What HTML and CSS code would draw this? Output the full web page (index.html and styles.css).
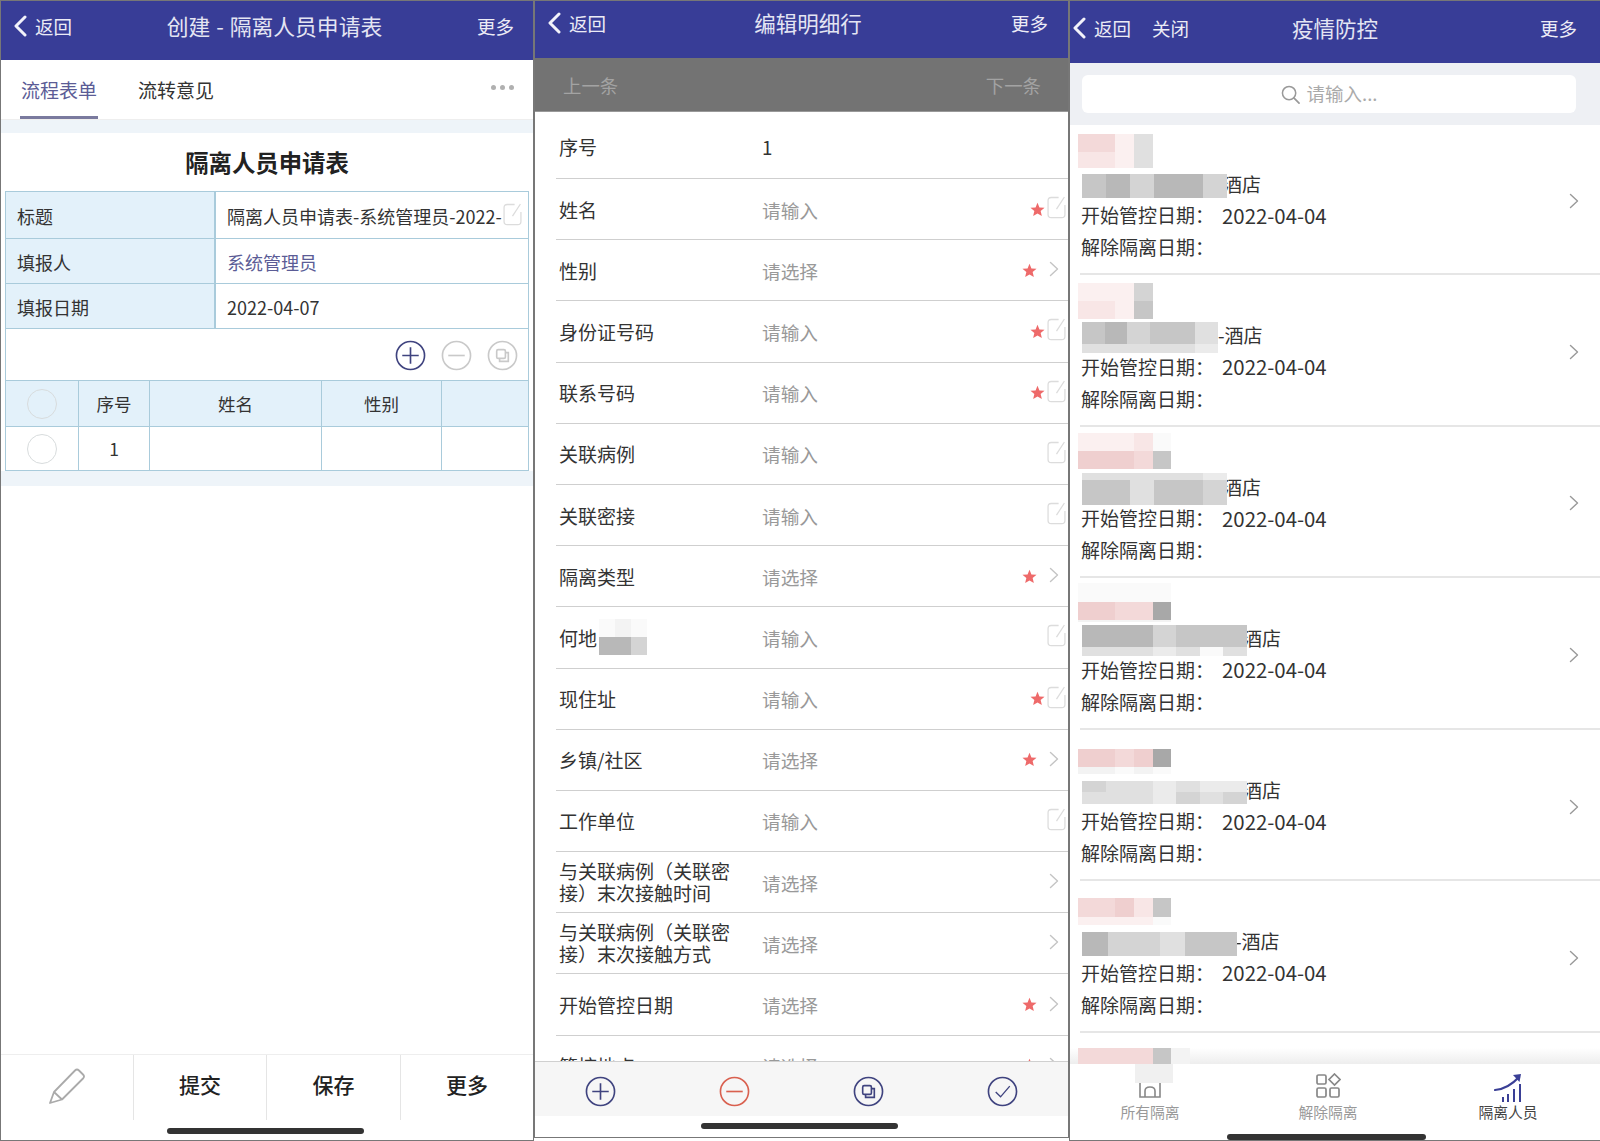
FILE: index.html
```html
<!DOCTYPE html>
<html lang="zh-CN">
<head>
<meta charset="utf-8">
<title>疫情防控</title>
<link rel="stylesheet" href="styles.css">
</head>
<body>
<svg class="defs" xmlns="http://www.w3.org/2000/svg">
  <symbol id="back" viewBox="0 0 14 22"><path d="M12 2 L3 11 L12 20" fill="none" stroke="currentColor" stroke-width="3" stroke-linecap="round" stroke-linejoin="round"/></symbol>
  <symbol id="chev" viewBox="0 0 10 16"><path d="M1.5 1.5 L8.5 8 L1.5 14.5" fill="none" stroke="currentColor" stroke-width="1.4" stroke-linecap="round" stroke-linejoin="round"/></symbol>
  <symbol id="edit" viewBox="0 0 18 22"><path d="M11 2 H4 Q1 2 1 5 V18 Q1 21 4 21 H14 Q17 21 17 18 V9" fill="none" stroke="currentColor" stroke-width="1.2"/><path d="M16.5 1.5 L9 13" fill="none" stroke="currentColor" stroke-width="1.2"/></symbol>
  <symbol id="star" viewBox="0 0 20 20"><polygon points="10,1 12.6,7.2 19.4,7.7 14.2,12.1 15.8,18.8 10,15.2 4.2,18.8 5.8,12.1 0.6,7.7 7.4,7.2" fill="currentColor"/></symbol>
  <symbol id="plus" viewBox="0 0 32 32"><circle cx="16" cy="16" r="14.5" fill="none" stroke="currentColor" stroke-width="1.7"/><path d="M7.5 16 H24.5 M16 7.5 V24.5" fill="none" stroke="currentColor" stroke-width="1.7"/></symbol>
  <symbol id="minus" viewBox="0 0 32 32"><circle cx="16" cy="16" r="14.5" fill="none" stroke="currentColor" stroke-width="1.7"/><path d="M7.5 16 H24.5" fill="none" stroke="currentColor" stroke-width="1.7"/></symbol>
  <symbol id="copy" viewBox="0 0 32 32"><circle cx="16" cy="16" r="14.5" fill="none" stroke="currentColor" stroke-width="1.7"/><rect x="10" y="10" width="9" height="9" rx="1.5" fill="none" stroke="currentColor" stroke-width="1.7"/><path d="M19 13 H22 V22 H13 V19" fill="none" stroke="currentColor" stroke-width="1.7"/></symbol>
  <symbol id="check" viewBox="0 0 32 32"><circle cx="16" cy="16" r="14.5" fill="none" stroke="currentColor" stroke-width="1.7"/><path d="M9 16.5 L14 21.5 L23.5 10.5" fill="none" stroke="currentColor" stroke-width="1.4"/></symbol>
</svg>

<main class="screens">
  <section class="phone p1">
    <header class="hdr">
      <div class="hdr-left"><svg class="back"><use href="#back"/></svg><span>返回</span></div>
      <div class="hdr-title">创建 - 隔离人员申请表</div>
      <div class="hdr-more">更多</div>
    </header>
    <nav class="tabs">
      <span class="tab active">流程表单</span>
      <span class="tab">流转意见</span>
      <span class="dots"><i></i><i></i><i></i></span>
    </nav>
    <div class="band"></div>
    <h1 class="form-title">隔离人员申请表</h1>
    <div class="sheet">
      <div class="frow r-first"><div class="flabel">标题</div><div class="fval"><span class="clip">隔离人员申请表-系统管理员-2022-</span><svg class="ic-edit edit-t"><use href="#edit"/></svg></div></div>
      <div class="frow"><div class="flabel">填报人</div><div class="fval link">系统管理员</div></div>
      <div class="frow"><div class="flabel">填报日期</div><div class="fval">2022-04-07</div></div>
      <div class="sub-tools">
        <svg class="cbtn navy"><use href="#plus"/></svg>
        <svg class="cbtn pale"><use href="#minus"/></svg>
        <svg class="cbtn pale"><use href="#copy"/></svg>
      </div>
      <div class="srow shead"><div class="scell"><span class="radio"></span></div><div class="scell">序号</div><div class="scell">姓名</div><div class="scell">性别</div><div class="scell"></div></div>
      <div class="srow sbody"><div class="scell"><span class="radio"></span></div><div class="scell">1</div><div class="scell"></div><div class="scell"></div><div class="scell"></div></div>
    </div>
    <div class="band band-b"></div>
    <div class="grow"></div>
    <div class="actions">
      <div class="act"><svg class="pencil" viewBox="0 0 36 36"><path d="M1 35 L5 24 L26 2.5 Q28 0.5 30 2.5 L34 6.5 Q36 8.5 34 10.5 L13 31.5 Z M5 24 L13 31.5" fill="none" stroke="#aaa" stroke-width="1.8" stroke-linejoin="round"/></svg></div>
      <div class="act">提交</div>
      <div class="act">保存</div>
      <div class="act">更多</div>
    </div>
    <div class="home home-1"></div>
  </section>

  <section class="phone p2">
    <header class="hdr">
      <div class="hdr-left"><svg class="back"><use href="#back"/></svg><span>返回</span></div>
      <div class="hdr-title">编辑明细行</div>
      <div class="hdr-more">更多</div>
    </header>
    <div class="pager"><span>上一条</span><span>下一条</span></div>
    <div class="rows">
      <div class="row row-first"><div class="rlabel">序号</div><div class="rval filled">1</div></div>
      <div class="row"><div class="rlabel">姓名</div><div class="rval">请输入</div><div class="rend"><svg class="star"><use href="#star"/></svg><svg class="ic-edit"><use href="#edit"/></svg></div></div>
      <div class="row"><div class="rlabel">性别</div><div class="rval">请选择</div><div class="rend sel"><svg class="star"><use href="#star"/></svg><svg class="ic-chev"><use href="#chev"/></svg></div></div>
      <div class="row"><div class="rlabel">身份证号码</div><div class="rval">请输入</div><div class="rend"><svg class="star"><use href="#star"/></svg><svg class="ic-edit"><use href="#edit"/></svg></div></div>
      <div class="row"><div class="rlabel">联系号码</div><div class="rval">请输入</div><div class="rend"><svg class="star"><use href="#star"/></svg><svg class="ic-edit"><use href="#edit"/></svg></div></div>
      <div class="row"><div class="rlabel">关联病例</div><div class="rval">请输入</div><div class="rend"><svg class="ic-edit"><use href="#edit"/></svg></div></div>
      <div class="row"><div class="rlabel">关联密接</div><div class="rval">请输入</div><div class="rend"><svg class="ic-edit"><use href="#edit"/></svg></div></div>
      <div class="row"><div class="rlabel">隔离类型</div><div class="rval">请选择</div><div class="rend sel"><svg class="star"><use href="#star"/></svg><svg class="ic-chev"><use href="#chev"/></svg></div></div>
      <div class="row"><div class="rlabel rlabel-m">何地<span class="tiles m-where"><i class="f2"></i><i class="f"></i><i class="f2"></i><i class="g2"></i><i class="g2"></i><i class="g4"></i></span></div><div class="rval">请输入</div><div class="rend"><svg class="ic-edit"><use href="#edit"/></svg></div></div>
      <div class="row"><div class="rlabel">现住址</div><div class="rval">请输入</div><div class="rend"><svg class="star"><use href="#star"/></svg><svg class="ic-edit"><use href="#edit"/></svg></div></div>
      <div class="row"><div class="rlabel">乡镇/社区</div><div class="rval">请选择</div><div class="rend sel"><svg class="star"><use href="#star"/></svg><svg class="ic-chev"><use href="#chev"/></svg></div></div>
      <div class="row"><div class="rlabel">工作单位</div><div class="rval">请输入</div><div class="rend"><svg class="ic-edit"><use href="#edit"/></svg></div></div>
      <div class="row"><div class="rlabel rlabel-2">与关联病例（关联密接）末次接触时间</div><div class="rval">请选择</div><div class="rend sel"><svg class="ic-chev"><use href="#chev"/></svg></div></div>
      <div class="row"><div class="rlabel rlabel-2">与关联病例（关联密接）末次接触方式</div><div class="rval">请选择</div><div class="rend sel"><svg class="ic-chev"><use href="#chev"/></svg></div></div>
      <div class="row"><div class="rlabel">开始管控日期</div><div class="rval">请选择</div><div class="rend sel"><svg class="star"><use href="#star"/></svg><svg class="ic-chev"><use href="#chev"/></svg></div></div>
      <div class="row"><div class="rlabel">管控地点</div><div class="rval">请选择</div><div class="rend sel"><svg class="star"><use href="#star"/></svg><svg class="ic-chev"><use href="#chev"/></svg></div></div>
    </div>
    <div class="row-tools">
      <svg class="cbtn navy"><use href="#plus"/></svg>
      <svg class="cbtn red"><use href="#minus"/></svg>
      <svg class="cbtn navy"><use href="#copy"/></svg>
      <svg class="cbtn navy"><use href="#check"/></svg>
    </div>
    <div class="home home-2"></div>
  </section>

  <section class="phone p3">
    <header class="hdr">
      <div class="hdr-left"><svg class="back"><use href="#back"/></svg><span>返回</span><span class="hdr-close">关闭</span></div>
      <div class="hdr-title">疫情防控</div>
      <div class="hdr-more">更多</div>
    </header>
    <div class="search">
      <div class="search-box">
        <svg class="search-ic" viewBox="0 0 20 20"><circle cx="8.5" cy="8.5" r="7" fill="none" stroke="#999" stroke-width="1.6"/><path d="M13.5 13.5 L19 19" stroke="#999" stroke-width="1.8" stroke-linecap="round"/></svg>
        <span>请输入...</span>
      </div>
    </div>
    <div class="list">
      <article class="item item-first">
        <div class="item-body">
          <div class="top t9"><div class="tiles c4"><i class="tp2"></i><i class="tp2"></i><i class="tp4"></i><i class="g5"></i><i class="tp3"></i><i class="tp3"></i><i class="tp4"></i><i class="g5"></i></div></div>
          <div class="title"><div class="tiles wide w145 h24 c6"><i class="g3"></i><i class="g2"></i><i class="g4"></i><i class="g2"></i><i class="g2"></i><i class="g4"></i></div><span class="under">酒店</span></div>
          <div class="line"><span class="k">开始管控日期：</span><span class="v">2022-04-04</span></div>
          <div class="line"><span class="k">解除隔离日期：</span></div>
        </div>
        <svg class="ic-chev-list"><use href="#chev"/></svg>
      </article>
      <article class="item">
        <div class="item-body">
          <div class="top t8"><div class="tiles c4"><i class="tp4"></i><i class="tp4"></i><i class="tp4"></i><i class="g4"></i><i class="tp3"></i><i class="tp3"></i><i class="tp4"></i><i class="g3"></i></div></div>
          <div class="title"><div class="tiles wide w136 rows-a c6"><i class="g3"></i><i class="g2"></i><i class="g4"></i><i class="g3"></i><i class="g3"></i><i class="g5"></i><i class="g5"></i><i class="g5"></i><i class="g5"></i><i class="g5"></i><i class="g5"></i><i class="g6"></i></div><span>-酒店</span></div>
          <div class="line"><span class="k">开始管控日期：</span><span class="v">2022-04-04</span></div>
          <div class="line"><span class="k">解除隔离日期：</span></div>
        </div>
        <svg class="ic-chev-list"><use href="#chev"/></svg>
      </article>
      <article class="item">
        <div class="item-body">
          <div class="top t6"><div class="tiles c5"><i class="tp4"></i><i class="tp4"></i><i class="tp4"></i><i class="tp3"></i><i class="f2"></i><i class="tp1"></i><i class="tp1"></i><i class="tp1"></i><i class="tp2"></i><i class="g3"></i></div></div>
          <div class="title"><div class="tiles wide w145 rows-b c6"><i class="g5"></i><i class="g5"></i><i class="g5"></i><i class="g5"></i><i class="g5"></i><i class="g6"></i><i class="g3"></i><i class="g3"></i><i class="g5"></i><i class="g3"></i><i class="g3"></i><i class="g4"></i></div><span class="under">酒店</span></div>
          <div class="line"><span class="k">开始管控日期：</span><span class="v">2022-04-04</span></div>
          <div class="line"><span class="k">解除隔离日期：</span></div>
        </div>
        <svg class="ic-chev-list"><use href="#chev"/></svg>
      </article>
      <article class="item">
        <div class="item-body">
          <div class="top t5"><div class="tiles c5"><i class="f2"></i><i class="f2"></i><i class="f2"></i><i class="f2"></i><i class="f2"></i><i class="tp1"></i><i class="tp1"></i><i class="tp2"></i><i class="tp2"></i><i class="g1"></i><i class="f"></i><i class="f"></i><i class="f"></i><i class="f"></i><i class="f"></i></div></div>
          <div class="title"><div class="tiles wide w165 rows-a c7"><i class="g2"></i><i class="g2"></i><i class="g2"></i><i class="g4"></i><i class="g3"></i><i class="g3"></i><i class="g3"></i><i class="g5"></i><i class="g5"></i><i class="g5"></i><i class="g6"></i><i class="g5"></i><i class="f2"></i><i class="g5"></i></div><span class="under">酒店</span></div>
          <div class="line"><span class="k">开始管控日期：</span><span class="v">2022-04-04</span></div>
          <div class="line"><span class="k">解除隔离日期：</span></div>
        </div>
        <svg class="ic-chev-list"><use href="#chev"/></svg>
      </article>
      <article class="item">
        <div class="item-body">
          <div class="top t19"><div class="tiles c5"><i class="tp1"></i><i class="tp1"></i><i class="tp2"></i><i class="tp1"></i><i class="g1"></i><i class="f"></i><i class="f"></i><i class="f2"></i><i class="f"></i><i class="f2"></i></div></div>
          <div class="title"><div class="tiles wide w165 rows-c c7"><i class="g4"></i><i class="g5"></i><i class="g5"></i><i class="g6"></i><i class="g5"></i><i class="g6"></i><i class="g6"></i><i class="g5"></i><i class="g5"></i><i class="g5"></i><i class="g6"></i><i class="g4"></i><i class="g5"></i><i class="g4"></i></div><span class="under">酒店</span></div>
          <div class="line"><span class="k">开始管控日期：</span><span class="v">2022-04-04</span></div>
          <div class="line"><span class="k">解除隔离日期：</span></div>
        </div>
        <svg class="ic-chev-list"><use href="#chev"/></svg>
      </article>
      <article class="item">
        <div class="item-body">
          <div class="top t17"><div class="tiles c5"><i class="tp2"></i><i class="tp2"></i><i class="tp1"></i><i class="tp3"></i><i class="g3"></i><i class="tp4"></i><i class="tp4"></i><i class="tp4"></i><i class="tp4"></i><i class="f2"></i></div></div>
          <div class="title"><div class="tiles wide w155 h24 c6"><i class="g2"></i><i class="g4"></i><i class="g4"></i><i class="g5"></i><i class="g3"></i><i class="g3"></i></div><span class="after">-酒店</span></div>
          <div class="line"><span class="k">开始管控日期：</span><span class="v">2022-04-04</span></div>
          <div class="line"><span class="k">解除隔离日期：</span></div>
        </div>
        <svg class="ic-chev-list"><use href="#chev"/></svg>
      </article>
      <article class="item item-last">
        <div class="item-body">
          <div class="top t15"><div class="tiles c6n"><i class="tp2"></i><i class="tp2"></i><i class="tp2"></i><i class="tp2"></i><i class="g3"></i><i class="f"></i></div></div>
        </div>
      </article>
    </div>
    <footer class="tabbar">
      <span class="tab-cover"></span>
      <div class="tabgrid">
        <div class="tb">
          <svg class="tb-ic" viewBox="0 0 26 26"><path d="M3 6 V24 H23 V6 M8 24 V18 Q8 14 13 14 Q18 14 18 18 V24" fill="none" stroke="#888" stroke-width="1.6"/></svg>
          <span>所有隔离</span>
        </div>
        <div class="tb">
          <svg class="tb-ic" viewBox="0 0 26 26"><rect x="2" y="2" width="9" height="9" rx="1.5" fill="none" stroke="#888" stroke-width="1.7"/><rect x="2" y="15" width="9" height="9" rx="1.5" fill="none" stroke="#888" stroke-width="1.7"/><rect x="15" y="15" width="9" height="9" rx="1.5" fill="none" stroke="#888" stroke-width="1.7"/><path d="M19.5 1 L25 6.5 L19.5 12 L14 6.5 Z" fill="none" stroke="#888" stroke-width="1.7"/></svg>
          <span>解除隔离</span>
        </div>
        <div class="tb tb-on">
          <svg class="tb-ic" viewBox="0 0 28 30"><path d="M1 17 Q14 16 25 4" fill="none" stroke="#3a3f96" stroke-width="2.2" stroke-linecap="round"/><path d="M19 2 L27 1 L25.5 9 Z" fill="#3a3f96"/><path d="M9 24 V29 M14 21 V29 M20 16 V29 M26 11 V29" fill="none" stroke="#3a3f96" stroke-width="2"/></svg>
          <span>隔离人员</span>
        </div>
      </div>
      <div class="home home-3"></div>
    </footer>
  </section>
</main>
</body>
</html>
```
FILE: styles.css
```css
* { box-sizing: border-box; }
html, body { margin: 0; height: 100%; background: #fff; overflow: hidden; }
body { font-family: "Noto Sans CJK SC", "Noto Sans", sans-serif; color: #333; }
.defs { display: none; }
.screens { display: flex; height: 1141px; align-items: flex-start; }
.phone { display: flex; flex-direction: column; background: #fff; overflow: hidden; position: relative; border-left: 1px solid #777; }
.p1 { width: 534px; height: 1141px; border-right: 1px solid #777; border-bottom: 1px solid #777; }
.p2 { width: 535px; height: 1138px; border-bottom: 1px solid #777; border-right: 1px solid #777; }
.p3 { width: 531px; height: 1141px; border-bottom: 1px solid #777; }

/* header */
.hdr { display: grid; background: #383d97; color: #ececf6; font-size: 18.5px; align-items: center; border-top: 1px solid #777; flex: none; }
.hdr-left { display: flex; align-items: center; }
.back { width: 14px; height: 22px; color: #f2f2fa; margin-right: 8px; flex: none; }
.hdr-title { text-align: center; font-size: 21.5px; color: #e4e5f3; }
.hdr-close { margin-left: 21px; }
.p1 .hdr { height: 60px; padding-bottom: 10px; grid-template-columns: 99px 349px 1fr; }
.p1 .hdr-title { font-size: 21.8px; word-spacing: 1px; }
.p1 .hdr-left { padding-left: 12px; }
.p1 .hdr-more { padding-left: 28px; }
.p2 .hdr { height: 58px; padding-bottom: 14px; grid-template-columns: 105px 336px 1fr; }
.p2 .hdr-left { padding-left: 12px; }
.p2 .hdr-more { padding-left: 35px; }
.p3 .hdr { height: 63px; padding-bottom: 9px; grid-template-columns: 137px 256px 1fr; }
.p3 .hdr-left { padding-left: 2px; }
.p3 .hdr-more { padding-left: 77px; }

/* tabs */
.tabs { display: flex; height: 60px; align-items: stretch; font-size: 19px; border-bottom: 1px solid #eee; flex: none; }
.tab { display: flex; align-items: center; padding: 3px 1px 0; margin-left: 39px; color: #333; border-bottom: 3px solid transparent; }
.tab.active { margin-left: 19px; color: #5b5c96; border-bottom-color: #7a7a9e; }
.dots { margin-left: auto; margin-right: 19px; display: flex; gap: 4px; align-items: center; padding-bottom: 4px; }
.dots i { width: 5px; height: 5px; border-radius: 50%; background: #b0b0b0; }
.band { height: 13px; background: #eef4f9; flex: none; }
.band-b { height: 15px; }
.form-title { margin: 0; height: 58px; flex: none; display: flex; align-items: center; justify-content: center; font-size: 23.4px; font-weight: 700; color: #222; }

/* sheet */
.sheet { margin: 0 4px; border: 1px solid #a9cbdb; font-size: 18px; color: #333; flex: none; }
.frow { display: grid; grid-template-columns: 210px 1fr; height: 45px; border-bottom: 1px solid #a9cbdb; }
.r-first { height: 47px; }
.flabel { background: #e3f1fa; border-right: 2px solid #a9cbdb; padding: 2px 0 0 11px; display: flex; align-items: center; }
.fval { display: flex; align-items: center; padding: 1px 0 0 11px; }
.clip { width: 275px; white-space: nowrap; flex: none; }
.link { color: #5b5c96; }
.ic-edit { width: 19px; height: 24px; color: #dcdcdc; flex: none; }
.edit-t { margin: -4px 0 0 1px; }
.sub-tools { display: flex; height: 51px; justify-content: flex-end; align-items: center; gap: 15px; padding: 1px 10px 0 0; }
.cbtn { width: 31px; height: 31px; flex: none; }
.navy { color: #3f437f; }
.pale { color: #c9c9c9; }
.red { color: #d9604f; }
.srow { display: grid; grid-template-columns: 73px 71px 172px 120px 1fr; border-top: 1px solid #a9cbdb; }
.shead { height: 46px; background: #e3f1fa; }
.sbody { height: 44px; }
.scell { display: flex; align-items: center; justify-content: center; border-right: 1px solid #a9cbdb; font-size: 17.5px; }
.scell:last-child { border-right: 0; }
.radio { width: 30px; height: 30px; border-radius: 50%; border: 1px solid #d8dcdd; }
.grow { flex: 1; }

/* bottom actions */
.actions { display: grid; grid-template-columns: 132px 133px 134px 1fr; height: 66px; border-top: 1px solid #eee; flex: none; }
.act { display: flex; align-items: center; justify-content: center; font-size: 21px; font-weight: 500; color: #222; border-left: 1px solid #e5e5e5; padding-bottom: 8px; }
.act:first-child { border-left: 0; padding-bottom: 4px; }
.pencil { width: 36px; height: 36px; }
.home { height: 6px; border-radius: 3px; background: #333; flex: none; }
.home-1 { width: 197px; margin: 8px 0 6px 166px; }
.home-2 { width: 197px; margin: 7px 0 8px 166px; }
.home-3 { width: 199px; margin: 0 0 0 157px; }

/* pager + rows */
.pager { display: flex; justify-content: space-between; align-items: center; height: 54px; flex: none; background: #737373; color: #a3a3a3; font-size: 18.4px; padding: 0 27px 0 28px; border-bottom: 1px solid #999; }
.rows { flex: 1; overflow: hidden; min-height: 0; }
.row { display: flex; align-items: center; height: 61.2px; margin-left: 21px; border-bottom: 1.5px solid #cfcfcf; font-size: 18.7px; padding-left: 3px; }
.row-first { height: 67px; padding-top: 3px; }
.rlabel { width: 203px; flex: none; color: #333; font-size: 19px; }
.rlabel-2 { padding-right: 30px; line-height: 22px; }
.rlabel-m { display: flex; align-items: center; }
.rval { color: #999; }
.rval.filled { color: #333; }
.rend { margin-left: auto; display: flex; align-items: center; padding-right: 2px; }
.rend.sel { padding-right: 9px; }
.rend.sel .star { margin-right: 12px; }
.star { width: 15px; height: 15px; color: #ee6a6a; flex: none; margin-right: 2px; }
.ic-chev { width: 10px; height: 16px; color: #c4c4c4; margin-top: -2px; flex: none; }
.rend .ic-edit { margin-top: -4px; }
.row-tools { display: grid; grid-template-columns: 134px 134px 134px 1fr; height: 55px; flex: none; align-items: center; background: #f6f6f6; border-top: 1.5px solid #d0d0d0; padding: 5px 0 0 50px; }

/* mosaic */
.tiles { display: grid; flex: none; }
.tiles i { display: block; }
.c4 { grid-template-columns: repeat(4, 18.7px); grid-auto-rows: 18.4px; }
.c5 { grid-template-columns: repeat(5, 18.7px); grid-auto-rows: 18.4px; }
.c6n { grid-template-columns: repeat(6, 18.7px); grid-auto-rows: 18.4px; }
.m-where { grid-template-columns: repeat(3, 16px); grid-auto-rows: 18px; margin-left: 2px; }
.wide.c6 { grid-template-columns: repeat(6, 1fr); }
.wide.c7 { grid-template-columns: repeat(7, 1fr); }
.wide { position: relative; z-index: 1; margin: 6px 0 0 1px; }
.w136 { width: 136px; }
.w145 { width: 145px; }
.w155 { width: 155px; }
.w165 { width: 165px; }
.h24 { height: 24px; }
.rows-a { grid-template-rows: 22px 9px; }
.rows-b { grid-template-rows: 7px 25px; }
.rows-c { grid-template-rows: 11px 12px; }
.tp1 { background: #efcfcf; }
.tp2 { background: #f3d9d9; }
.tp3 { background: #f8e6e6; }
.tp4 { background: #fbf0f0; }
.f { background: #f3f3f3; }
.f2 { background: #fafafa; }
.g1 { background: #a8a8a8; }
.g2 { background: #b8b8b8; }
.g3 { background: #c6c6c6; }
.g4 { background: #d4d4d4; }
.g5 { background: #e0e0e0; }
.g6 { background: #ebebeb; }

/* search + list */
.search { height: 62px; background: #eef0f4; padding: 12px 24px 12px 12px; flex: none; }
.search-box { height: 38px; background: #fff; border-radius: 6px; display: flex; align-items: center; justify-content: center; gap: 7px; color: #aaa; font-size: 18.5px; padding-bottom: 3px; }
.search-ic { width: 19px; height: 19px; margin-top: 3px; }
.list { flex: 1; overflow: hidden; min-height: 0; }
.item { display: flex; align-items: center; height: 151.6px; margin-left: 10px; padding: 4px 21px 0 1px; border-bottom: 2px solid #e6e6e6; font-size: 19px; color: #333; }
.item-first { height: 150px; }
.item-body { flex: 1; align-self: flex-start; margin-top: -4px; }
.top { height: 44px; overflow: hidden; margin-left: -3px; }
.item-first .top { height: 42.5px; }
.t5 { padding-top: 5px; }
.t6 { padding-top: 6px; }
.t8 { padding-top: 8px; }
.t9 { padding-top: 9px; }
.t15 { padding-top: 15px; }
.t17 { padding-top: 17px; }
.t19 { padding-top: 19px; }
.title { display: flex; align-items: center; height: 31px; }
.under { margin-left: -4px; }
.after { margin-left: -2px; }
.line { display: flex; align-items: center; height: 32px; }
.k { width: 141px; flex: none; }
.v { font-size: 20.4px; }
.ic-chev-list { width: 10px; height: 16px; color: #999; flex: none; }
.item-last { height: 33px; border-bottom: 0; margin-left: 0; padding-left: 11px; background: linear-gradient(#fff 45%, #ebebeb); overflow: hidden; }

/* tabbar */
.tabbar { height: 76px; flex: none; position: relative; background: #fff; overflow: hidden; }
.tab-cover { position: absolute; left: 65px; top: 0; width: 38px; height: 19px; background: #f0f0f0; z-index: 1; }
.tabgrid { display: grid; grid-template-columns: 160px 196px 164px; height: 70px; }
.tb { display: flex; flex-direction: column; align-items: center; font-size: 14.8px; color: #999; padding-top: 9px; }
.tb-ic { width: 26px; height: 26px; flex: none; margin-bottom: 2px; }
.tb-on { color: #444; }
.tb-on .tb-ic { width: 28px; height: 30px; margin-bottom: -2px; }
```
